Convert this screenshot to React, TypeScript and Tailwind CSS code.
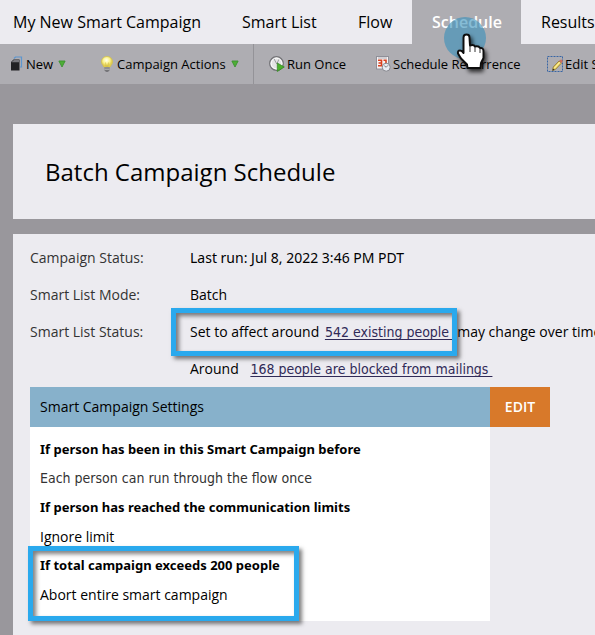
import React from "react";

const tabs = [
  { label: "My New Smart Campaign", width: "w-[222px] pl-[13px]" },
  { label: "Smart List", width: "w-[116px] pl-5" },
  { label: "Flow", width: "w-[74px] pl-5" },
  { label: "Schedule", width: "w-[109px] pl-5", active: true },
  { label: "Results", width: "w-[110px] pl-5" },
];

function NewIcon() {
  return (
    <svg width="13" height="16" viewBox="0 0 13 16" aria-hidden="true">
      <path d="M3 2.500 4.500 1h6v10H9" fill="none" stroke="#5c96cf" strokeWidth="1.200" />
      <path d="M0 6 2.500 3.500H8.500V14.500H0z" fill="#222225" />
      <path d="M.5 6.200 2.800 4H8v2.200z" fill="#77777d" />
    </svg>
  );
}

function BulbIcon() {
  return (
    <svg width="14" height="16" viewBox="0 0 14 16" aria-hidden="true">
      <defs>
        <radialGradient id="bulb" cx="45%" cy="35%">
          <stop offset="0" stopColor="#fffff0" />
          <stop offset="0.6" stopColor="#fbf38f" />
          <stop offset="1" stopColor="#e2cf52" />
        </radialGradient>
      </defs>
      <path d="M7 .5C3.500.5 1.500 3 1.500 5.800c0 2.300 1.700 3.400 2.500 5.400h6c.8-2 2.500-3.100 2.500-5.400C12.500 3 10.500.5 7 .5z" fill="url(#bulb)" stroke="#d3c04c" strokeWidth=".8" />
      <path d="M5.500 6.500 6.300 11M8.500 6.500 7.700 11" stroke="#cdb53e" strokeWidth=".6" />
      <path d="M4.500 11h5v3.500L8 15.700H6l-1.500-1.200z" fill="#66666a" />
      <path d="M4.500 12h5M4.500 13.700h5" stroke="#ddd" strokeWidth=".7" />
    </svg>
  );
}

function RunIcon() {
  return (
    <svg width="16" height="16" viewBox="0 0 16 16" aria-hidden="true">
      <circle cx="7.500" cy="7.500" r="6.800" fill="#e4e4e5" stroke="#737377" strokeWidth="1.300" />
      <circle cx="7.500" cy="7.500" r="5.400" fill="none" stroke="#fff" strokeWidth="1" />
      <path d="M5 2.800 7.800 8l2-4.500" fill="none" stroke="#9b9ba0" strokeWidth="1" />
      <path d="M8.300 7v8.500l7-4.500z" fill="#4caf2e" stroke="#2f8420" strokeWidth=".7" />
    </svg>
  );
}

function RecurrenceIcon() {
  return (
    <svg width="15" height="16" viewBox="0 0 15 16" aria-hidden="true">
      <rect x=".5" y=".5" width="12" height="12.500" fill="#f7f3f3" stroke="#8f8f98" />
      <path d="M2 2h9" stroke="#9a9aa4" strokeWidth=".8" />
      <path d="M2 4.200h3.500v5.600H2M2.500 7h3M7.500 4.200H10v6" fill="none" stroke="#d9401f" strokeWidth="1.600" />
      <circle cx="10.200" cy="11.200" r="4" fill="#e9edf3" stroke="#85858c" />
      <path d="m8.200 9.700 2 1.500 2-2" fill="none" stroke="#777" strokeWidth=".9" />
    </svg>
  );
}

function EditIcon() {
  return (
    <svg width="16" height="16" viewBox="0 0 16 16" aria-hidden="true">
      <rect x=".5" y=".5" width="15" height="15" fill="none" stroke="#3865a5" strokeDasharray="2 1" />
      <path d="m5.500 14.500.8-3.500L12 5l2.300 2.200-5.800 6.100z" fill="#f0d860" stroke="#80651e" strokeWidth=".7" />
      <path d="M7.500 12 13 6.200" stroke="#fff6b8" />
      <path d="m12 5 1-1a1.200 1.200 0 0 1 2.200 2.200l-.9 1z" fill="#c9705f" />
      <path d="m5.500 14.500.5-2L7.500 14z" fill="#222" />
    </svg>
  );
}

function DownArrow() {
  return (
    <svg width="8" height="8" viewBox="0 0 8 8" aria-hidden="true">
      <path d="M.9 1h6.200L4 7z" fill="#4fae36" stroke="#3a9230" strokeWidth=".9" />
    </svg>
  );
}

function Pointer() {
  return (
    <svg className="pointer-events-none absolute left-[440px] top-3 z-10" width="60" height="66" viewBox="440 12 60 66" aria-hidden="true">
      <defs>
        <filter id="hand-shadow" x="-40%" y="-40%" width="190%" height="190%">
          <feDropShadow dx="2" dy="3" stdDeviation="2" floodOpacity=".75" />
        </filter>
      </defs>
      <circle cx="465" cy="38" r="21" fill="#368fbb" fillOpacity=".6" />
      <path
        filter="url(#hand-shadow)"
        d="M463.500 53 L463.500 37.500 Q463.500 34.500 466.500 34.500 Q469.500 34.500 469.500 37.500 L470 45.500 Q473.500 44 475 46.500 Q478.500 45.500 480 48 Q483.500 47.500 483.500 51.500 L483.500 58 L481 63 L480.500 68 L467.500 68 L467 64.500 L461 58.500 L458 53.500 Q457.500 50.500 460 50.500 Q462 50.500 463.500 53 Z"
        fill="#fff"
        stroke="#111"
        strokeWidth="2"
        strokeLinejoin="round"
      />
      <path d="M470 46v6M475 47v5M480 48.500v4.500" stroke="#333" strokeWidth="1" />
    </svg>
  );
}

const tool = "flex items-center whitespace-nowrap";
const condensed = "font-['DejaVu_Sans_Condensed','DejaVu_Sans',sans-serif]";
const link = `${condensed} text-[#302a57] underline underline-offset-2 [text-decoration-skip-ink:none] whitespace-pre`;
const question = "font-['Noto_Sans',sans-serif] text-[13px] font-bold";
const highlight = "pointer-events-none absolute border-[5px] border-[#2aa9ed] shadow-[3px_3px_4px_rgba(0,0,0,0.5),inset_3px_3px_4px_rgba(0,0,0,0.5)]";

export default function App() {
  return (
    <div className="relative min-h-screen overflow-hidden bg-[#99979c] font-['Open_Sans',sans-serif] text-sm text-black">
      <nav className="flex h-11 bg-[#ecebf0] text-base">
        {tabs.map((tab) => (
          <button
            key={tab.label}
            className={`shrink-0 whitespace-nowrap text-left ${tab.width} ${tab.active ? "bg-[#aeadb2] font-semibold text-white" : ""}`}
          >
            {tab.label}
          </button>
        ))}
      </nav>

      <div className="flex h-10 bg-[#aeadb2] text-[13px]">
        <div className="flex w-[254px] shrink-0 border-r border-[#949398] pl-[11px]">
          <button className={`${tool} w-[89px]`}>
            <NewIcon /><span className="ml-0.5 mr-[5px]">New</span><DownArrow />
          </button>
          <button className={tool}>
            <BulbIcon /><span className="ml-[3px] mr-[5px]">Campaign Actions</span><DownArrow />
          </button>
        </div>
        <button className={`${tool} ml-[15px] w-[107px] shrink-0 gap-0.5`}><RunIcon />Run Once</button>
        <button className={`${tool} w-[171px] shrink-0 gap-0.5`}><RecurrenceIcon />Schedule Recurrence</button>
        <button className={`${tool} shrink-0 gap-0.5`}><EditIcon />Edit Settings</button>
      </div>
      <Pointer />

      <main className="ml-[13px] mt-10">
        <header className="flex h-[95px] items-center bg-[#ecebf0] pl-8">
          <h1 className="text-2xl">Batch Campaign Schedule</h1>
        </header>

        <section className="mt-[15px] min-h-[401px] bg-[#ecebf0] pl-[17px] pt-[5px]">
          <dl className="grid grid-cols-[160px_1fr] auto-rows-[37px] items-center whitespace-nowrap">
            <dt className="text-[#333]">Campaign Status:</dt>
            <dd className="font-['Noto_Sans',sans-serif]">Last run: Jul 8, 2022 3:46 PM PDT</dd>
            <dt className="text-[#333]">Smart List Mode:</dt>
            <dd>Batch</dd>
            <dt className="text-[#333]">Smart List Status:</dt>
            <dd className="relative">
              Set to affect around <a href="#people" className={`${link} ml-0.5`}>{"542 existing people "}</a>(may change over time)
              <span className={`${highlight} -left-[19px] -top-3.5 h-12 w-[286px]`} />
            </dd>
            <dd className="col-start-2">
              Around <a href="#blocked" className={`${link} ml-2`}>{"168 people are blocked from mailings "}</a>
            </dd>
          </dl>

          <div className="flex items-start">
            <div className="w-[460px] bg-white">
              <h2 className="flex h-10 items-center bg-[#87b1cb] pl-2.5">Smart Campaign Settings</h2>
              <dl className="h-[194px] pl-2.5 pt-2 leading-[29px]">
                <dt className={question}>If person has been in this Smart Campaign before</dt>
                <dd className={`${condensed} text-[#333]`}>Each person can run through the flow once</dd>
                <dt className={question}>If person has reached the communication limits</dt>
                <dd>Ignore limit</dd>
                <div className="relative">
                  <dt className={question}>If total campaign exceeds 200 people</dt>
                  <dd>Abort entire smart campaign</dd>
                  <span className={`${highlight} -left-3 -top-[5px] h-[75px] w-[271px]`} />
                </div>
              </dl>
            </div>
            <button className="h-10 w-[60px] bg-[#d8792a] font-semibold text-white">EDIT</button>
          </div>
        </section>
      </main>
    </div>
  );
}
